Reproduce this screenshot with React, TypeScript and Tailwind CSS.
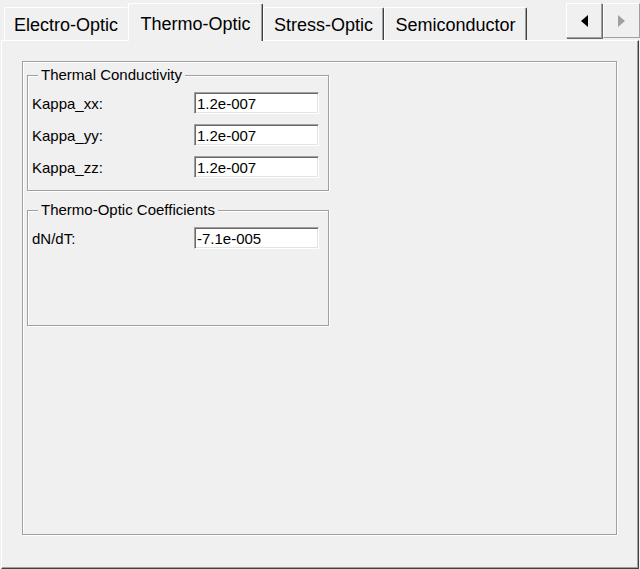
import React from "react";

const FONT = { fontFamily: '"Liberation Sans", Arial, sans-serif' };

type TabProps = { label: string; width: string; selected?: boolean; hideRight?: boolean };

function Tab({ label, width, selected, hideRight }: TabProps) {
  if (selected) {
    return (
      <div
        className={`${width} relative z-10 -mb-px h-[38px] flex items-center justify-center pt-[2px] bg-[#f0f0f0] border-l border-t border-r border-l-white border-t-white border-r-[#404040] rounded-t-[2px] shadow-[inset_-1px_0_0_#a0a0a0] text-[18px] leading-none text-black`}
      >
        {label}
      </div>
    );
  }
  const right = hideRight
    ? "border-r-[#f0f0f0]"
    : "border-r-[#404040] shadow-[inset_-1px_0_0_#a0a0a0]";
  return (
    <div
      className={`${width} ${right} h-[33px] flex items-center justify-center pt-[2px] bg-[#f0f0f0] border-l border-t border-r border-l-white border-t-white rounded-t-[2px] text-[18px] leading-none text-black`}
    >
      {label}
    </div>
  );
}

function Field({ value }: { value: string }) {
  return (
    <div className="w-[125px] h-[22px] flex items-center pl-[2px] bg-white border border-t-[#a0a0a0] border-l-[#a0a0a0] border-r-white border-b-white shadow-[inset_1px_1px_0_#696969,inset_-1px_-1px_0_#e3e3e3] text-[15px] leading-none text-black">
      {value}
    </div>
  );
}

function Row({ label, value }: { label: string; value: string }) {
  return (
    <div className="flex items-center h-[22px]">
      <div className="w-[166px] pl-[4px] text-[15px] leading-none text-black">{label}</div>
      <Field value={value} />
    </div>
  );
}

function Group({
  title,
  className,
  children,
}: {
  title: string;
  className?: string;
  children: React.ReactNode;
}) {
  return (
    <div
      className={`relative w-[302px] h-[116px] shrink-0 border border-[#a0a0a0] shadow-[inset_1px_1px_0_#fff,1px_1px_0_#fff] pt-[16px] ${className ?? ""}`}
    >
      <span className="absolute left-[10px] -top-[9px] px-[3px] bg-[#f0f0f0] text-[15px] leading-[16px] text-black whitespace-nowrap">
        {title}
      </span>
      <div className="flex flex-col gap-[10px]">{children}</div>
    </div>
  );
}

export default function App() {
  return (
    <div className="w-[640px] h-[569px] bg-[#f0f0f0] flex flex-col overflow-hidden" style={FONT}>
      {/* tab strip */}
      <div className="h-[40px] shrink-0 flex items-end">
        <div className="ml-[4px] flex items-end">
          <Tab label="Electro-Optic" width="w-[124px]" hideRight />
          <Tab label="Thermo-Optic" width="w-[135px]" selected />
          <Tab label="Stress-Optic" width="w-[121px]" />
          <Tab label="Semiconductor" width="w-[143px]" />
        </div>
        <div className="flex-1" />
        <div className="self-start mt-[3px] flex">
          <div className="w-[36px] h-[35px] flex items-center justify-center bg-[#f0f0f0] border border-l-white border-t-white border-r-[#a0a0a0] border-b-[#a0a0a0] shadow-[1px_1px_0_#696969]">
            <div className="w-0 h-0 border-y-[6px] border-y-transparent border-r-[7px] border-r-black" />
          </div>
          <div className="ml-px w-[37px] h-[35px] flex items-center justify-center bg-[#f0f0f0] border border-l-white border-t-white border-r-[#a0a0a0] border-b-[#a0a0a0]">
            <div className="w-0 h-0 border-y-[6px] border-y-transparent border-l-[7px] border-l-[#a0a0a0]" />
          </div>
        </div>
      </div>

      {/* tab page */}
      <div className="flex-1 ml-[1px] w-[638px] border border-l-white border-t-white border-r-[#404040] border-b-[#404040] shadow-[inset_-1px_-1px_0_#a0a0a0] pl-[20px] pt-[20px]">
        <div className="w-[595px] h-[474px] border border-[#a0a0a0] shadow-[inset_1px_1px_0_#fff,1px_1px_0_#fff] pl-[4px] pt-[13px] flex flex-col">
          <Group title="Thermal Conductivity">
            <Row label="Kappa_xx:" value="1.2e-007" />
            <Row label="Kappa_yy:" value="1.2e-007" />
            <Row label="Kappa_zz:" value="1.2e-007" />
          </Group>
          <Group title="Thermo-Optic Coefficients" className="mt-[19px]">
            <Row label="dN/dT:" value="-7.1e-005" />
          </Group>
        </div>
      </div>
    </div>
  );
}
